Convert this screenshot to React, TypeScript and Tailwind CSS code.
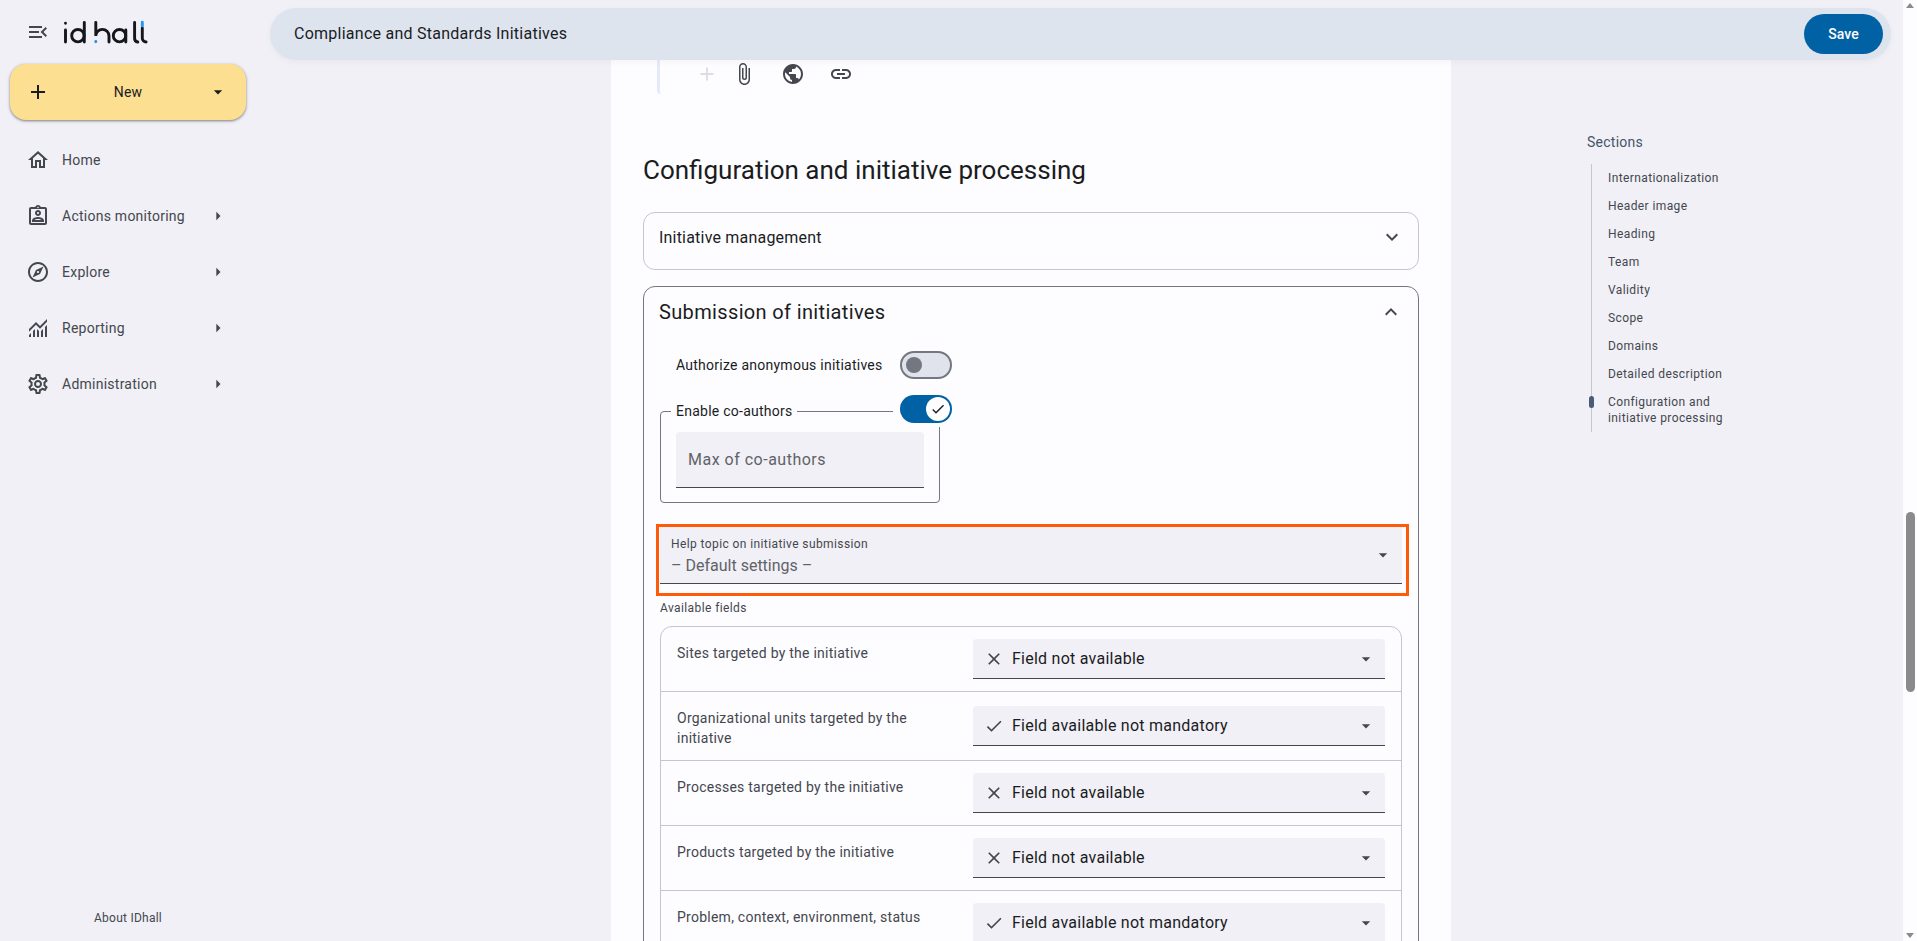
import {
  MdAdd,
  MdArrowDropDown,
  MdArrowRight,
  MdAttachFile,
  MdCheck,
  MdClose,
  MdKeyboardArrowDown,
  MdKeyboardArrowUp,
  MdLink,
  MdMenuOpen,
  MdOutlineAssignmentInd,
  MdOutlineExplore,
  MdOutlineHome,
  MdOutlineSettings,
  MdPublic,
} from 'react-icons/md'

function Logo() {
  return (
    <svg width="90" height="32" viewBox="60 16 90 32" fill="none" strokeLinecap="round">
      <g stroke="#15171c" strokeWidth="2.9">
        <path d="M65.5 23.2v.1M65.5 30V42" />
        <circle cx="77.9" cy="35.7" r="6.2" />
        <path d="M84.3 22.5V42" />
        <path d="M95.8 22.5V36a6.6 6.6 0 0 1 13.2 0v6" />
        <circle cx="119.5" cy="35.7" r="6.2" />
        <path d="M125.8 30V42" />
        <path d="M134.6 22.5v15.5a3.8 3.8 0 0 0 3.2 4" />
        <path d="M142.3 28v10a3.8 3.8 0 0 0 3.8 4" />
      </g>
      <path d="M95.8 41.5v.3M142.3 22.3v3.6" stroke="#2196f3" strokeWidth="2.9" />
    </svg>
  )
}

function ReportingIcon() {
  return (
    <svg width="24" height="24" viewBox="0 -960 960 960" fill="currentColor">
      <path d="M120-120v-80l80-80v160h-80Zm160 0v-240l80-80v320h-80Zm160 0v-320l80 81v239h-80Zm160 0v-239l80-80v319h-80Zm160 0v-400l80-80v480h-80ZM120-327v-113l280-280 160 160 280-280v113L560-447 400-607 120-327Z" />
    </svg>
  )
}

const navItems = [
  { label: 'Home', icon: <MdOutlineHome size={24} />, arrow: false },
  { label: 'Actions monitoring', icon: <MdOutlineAssignmentInd size={24} />, arrow: true },
  { label: 'Explore', icon: <MdOutlineExplore size={24} />, arrow: true },
  { label: 'Reporting', icon: <ReportingIcon />, arrow: true },
  { label: 'Administration', icon: <MdOutlineSettings size={24} />, arrow: true },
]

function Sidebar() {
  return (
    <aside className="flex h-full w-[270px] shrink-0 flex-col">
      <div className="flex h-[64px] items-center pl-[26px]">
        <MdMenuOpen size={24} className="text-[#44474e]" />
        <div className="ml-[10px]">
          <Logo />
        </div>
      </div>
      <button className="mx-[10px] flex h-[56px] w-[236px] items-center rounded-2xl bg-[#fddf92] pl-[16px] pr-[18px] text-[#1a1c1e] shadow-[0_1px_3px_1px_rgba(0,0,0,0.15),0_1px_2px_rgba(0,0,0,0.3)]">
        <MdAdd size={24} />
        <span className="flex-1 pr-[2px] text-center text-sm tracking-[0.25px]">New</span>
        <MdArrowDropDown size={20} />
      </button>
      <nav className="mt-[12px] flex flex-col">
        {navItems.map((item) => (
          <div key={item.label} className="flex h-[56px] items-center pl-[26px] pr-[42px] text-[#44474e]">
            {item.icon}
            <span className="ml-[12px] flex-1 text-sm tracking-[0.25px]">{item.label}</span>
            {item.arrow && <MdArrowRight size={20} />}
          </div>
        ))}
      </nav>
      <div className="mt-auto mb-[15px] pl-[94px] text-xs tracking-[0.25px] text-[#44474e]">About IDhall</div>
    </aside>
  )
}

function Toggle({ on }: { on: boolean }) {
  if (on) {
    return (
      <div className="flex h-[28px] w-[52px] items-center justify-end rounded-full bg-[#0061a4] pr-[2px]">
        <div className="flex h-[24px] w-[24px] items-center justify-center rounded-full bg-white text-[#1a1c1e]">
          <MdCheck size={16} />
        </div>
      </div>
    )
  }
  return (
    <div className="flex h-[28px] w-[52px] items-center rounded-full border-2 border-[#73777f] bg-[#e0e2ec] pl-[4px]">
      <div className="h-[16px] w-[16px] rounded-full bg-[#73777f]" />
    </div>
  )
}

const fields = [
  { label: 'Sites targeted by the initiative', available: false },
  { label: 'Organizational units targeted by the initiative', available: true },
  { label: 'Processes targeted by the initiative', available: false },
  { label: 'Products targeted by the initiative', available: false },
  { label: 'Problem, context, environment, status', available: true },
]

function FieldRow({ label, available }: { label: string; available: boolean }) {
  return (
    <div className="flex items-center justify-between border-b border-[#c3c6cf] py-[12px] pl-[16px] pr-[16px] last:border-b-0">
      <div className="w-[270px] self-start pt-[4px] text-sm tracking-[0.25px] text-[#44474e]">{label}</div>
      <div className="flex h-[40px] w-[412px] items-center rounded-t border-b border-[#44474e] bg-[#f1f0f6] pl-[11px] pr-[9px] text-[#1a1c1e]">
        {available ? <MdCheck size={20} className="text-[#44474e]" /> : <MdClose size={20} className="text-[#44474e]" />}
        <span className="ml-[8px] flex-1 text-base tracking-[0.25px]">
          {available ? 'Field available not mandatory' : 'Field not available'}
        </span>
        <MdArrowDropDown size={20} className="text-[#44474e]" />
      </div>
    </div>
  )
}

function Card() {
  return (
    <div className="w-[840px] shrink-0 bg-[#fdfcff] px-[32px]">
      <div className="ml-[14px] flex h-[34px] items-start rounded-bl-sm border-l-[3px] border-[#e4eaf8] pt-[2px] text-[#44474e]">
        <MdAdd size={22} className="ml-[36px] mt-[1px] text-[#dcdde0]" />
        <MdAttachFile size={24} className="ml-[14px]" />
        <MdPublic size={24} className="ml-[25px]" />
        <MdLink size={24} className="ml-[24px]" />
      </div>
      <h2 className="mt-[56px] text-[26px] leading-[40px] text-[#1a1c1e]">Configuration and initiative processing</h2>
      <div className="mt-[22px] flex h-[58px] items-start justify-between rounded-xl border border-[#c3c6cf] pl-[15px] pr-[14px] pt-[12px]">
        <span className="mt-[1px] text-base font-[450] leading-[24px] tracking-[0.2px] text-[#1a1c1e]">Initiative management</span>
        <MdKeyboardArrowDown size={24} className="text-[#44474e]" />
      </div>
      <div className="mt-[16px] rounded-xl border border-[#73777f] pb-[40px]">
        <div className="flex h-[50px] items-center justify-between pl-[15px] pr-[15px]">
          <span className="text-xl tracking-[0.35px] text-[#1a1c1e]">Submission of initiatives</span>
          <MdKeyboardArrowUp size={24} className="text-[#44474e]" />
        </div>
        <div className="mt-[14px] flex items-center pl-[32px]">
          <span className="w-[224px] text-sm tracking-[0.25px] text-[#1a1c1e]">Authorize anonymous initiatives</span>
          <Toggle on={false} />
        </div>
        <fieldset className="relative ml-[16px] mt-[22px] h-[102px] w-[280px] rounded border border-[#73777f]">
          <legend className="ml-[10px] px-[5px] text-sm leading-[20px] tracking-[0.25px] text-[#1a1c1e]">Enable co-authors</legend>
          <div className="absolute left-[232px] top-[-26px] bg-[#fdfcff] pb-[4px] pl-[7px]">
            <Toggle on={true} />
          </div>
          <div className="ml-[15px] mt-[11px] flex h-[56px] w-[248px] items-center rounded-t border-b border-[#44474e] bg-[#f1f0f6] pl-[12px] text-base tracking-[0.5px] text-[#5f6368]">
            Max of co-authors
          </div>
        </fieldset>
        <div className="ml-[12px] mt-[21px] h-[72px] w-[753px] border-[3px] border-[#ff5a0a]">
          <div className="ml-[1px] flex h-[57px] w-[742px] items-center border-b border-[#44474e] bg-[#f1f0f6] pl-[11px] pr-[9px]">
            <div className="flex-1 pt-[3px]">
              <div className="text-xs leading-[16px] tracking-[0.4px] text-[#44474e]">Help topic on initiative submission</div>
              <div className="mt-[2px] text-base leading-[24px] text-[#5f6368]">– Default settings –</div>
            </div>
            <MdArrowDropDown size={20} className="text-[#44474e]" />
          </div>
        </div>
        <div className="ml-[16px] mt-[4px] text-xs leading-[16px] tracking-[0.4px] text-[#44474e]">Available fields</div>
        <div className="ml-[16px] mt-[10px] w-[742px] rounded-xl border border-[#c3c6cf]">
          {fields.map((field) => (
            <FieldRow key={field.label} label={field.label} available={field.available} />
          ))}
        </div>
      </div>
    </div>
  )
}

const sections = [
  'Internationalization',
  'Header image',
  'Heading',
  'Team',
  'Validity',
  'Scope',
  'Domains',
  'Detailed description',
]

function SectionNav() {
  return (
    <div className="ml-[136px] w-[180px] pt-[72px]">
      <div className="text-sm leading-[20px] tracking-[0.25px] text-[#44546a]">Sections</div>
      <div className="relative ml-[4px] mt-[12px] h-[268px] border-l border-[#c3c6cf] pl-[16px] text-xs tracking-[0.4px] text-[#44474e]">
        {sections.map((section) => (
          <div key={section} className="flex h-[28px] items-center">
            {section}
          </div>
        ))}
        <div className="pt-[6px] leading-[16px]">
          Configuration and
          <br />
          initiative processing
        </div>
        <div className="absolute left-[-3px] top-[232px] h-[12px] w-[5px] rounded-full bg-[#4a5a78]" />
      </div>
    </div>
  )
}

function Scrollbar() {
  return (
    <div className="flex h-full w-[14px] shrink-0 flex-col items-center justify-between bg-[#fdfcff] py-[3px]">
      <div className="h-0 w-0 border-x-[4px] border-b-[5px] border-x-transparent border-b-[#8a8a8a]" />
      <div className="mb-[241px] mt-[504px] h-[188px] w-[9px] rounded-full bg-[#8a8a8a]" />
      <div className="h-0 w-0 border-x-[4px] border-t-[5px] border-x-transparent border-t-[#8a8a8a]" />
    </div>
  )
}

export default function App() {
  return (
    <div className="flex h-[941px] w-full overflow-hidden bg-[#f0f0f6] font-['Roboto',sans-serif]">
      <Sidebar />
      <main className="flex h-full min-w-0 flex-1 flex-col">
        <div className="relative z-10 pr-[12px] pt-[8px]">
          <div className="flex h-[52px] items-center justify-between rounded-[26px] bg-[#dee4ee] pl-[24px] pr-[8px] shadow-[0_2px_6px_rgba(0,0,0,0.04)]">
            <span className="text-base tracking-[0.25px] text-[#1a1c1e]">Compliance and Standards Initiatives</span>
            <button className="h-[40px] w-[79px] rounded-[20px] bg-[#0061a4] text-sm font-medium text-white">Save</button>
          </div>
        </div>
        <div className="flex min-h-0 flex-1 pl-[341px]">
          <Card />
          <SectionNav />
        </div>
      </main>
      <Scrollbar />
    </div>
  )
}
